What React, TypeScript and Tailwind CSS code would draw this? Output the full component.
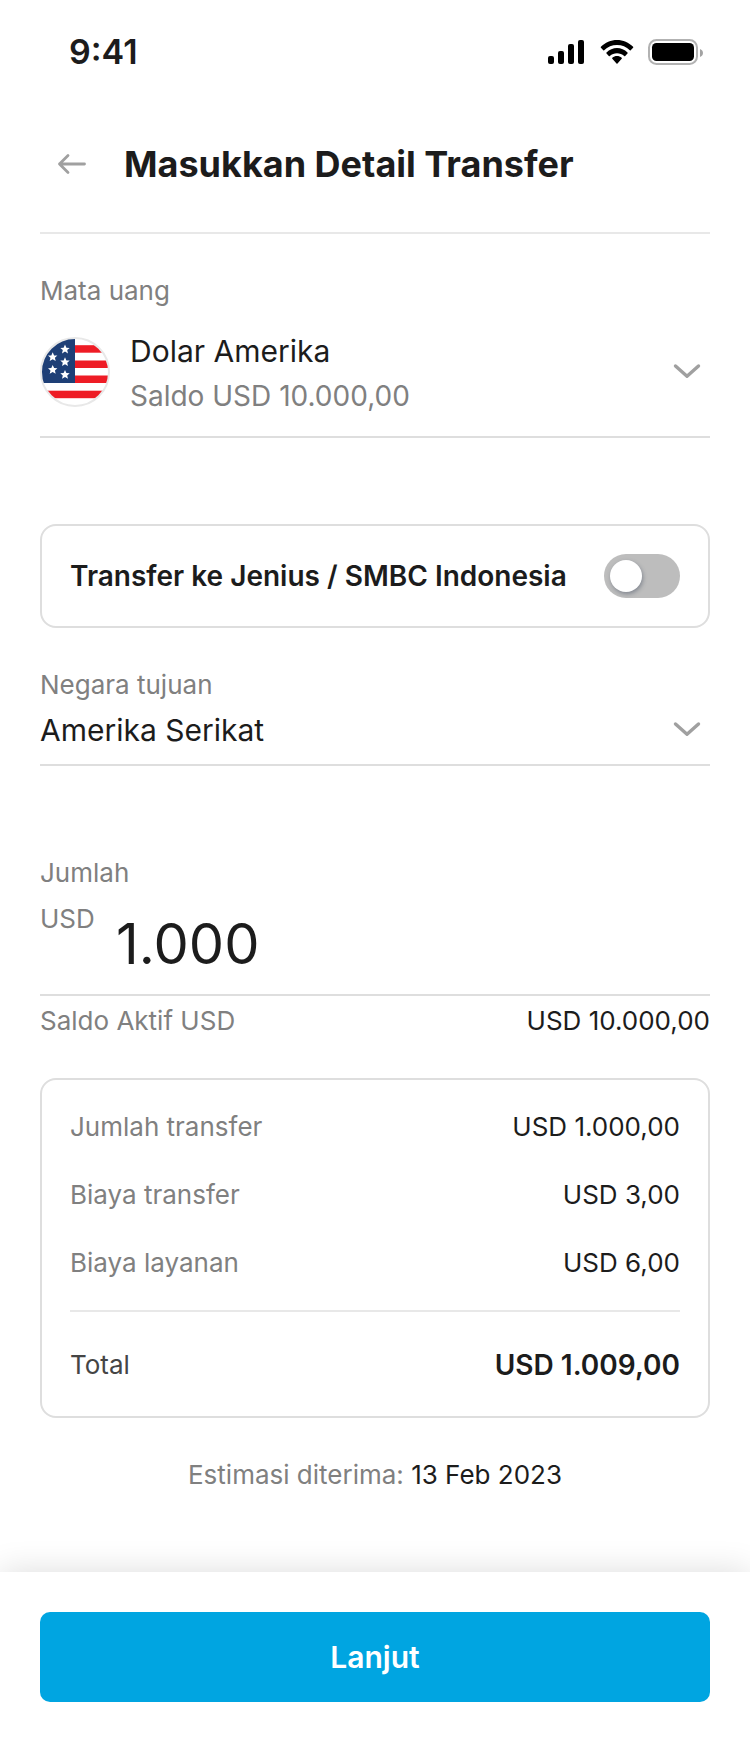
import { useState } from "react";

const STAR_POINTS = "0,-4.8 1.4,-1.6 4.7,-1.4 2.2,0.8 3,4.1 0,2.3 -3,4.1 -2.2,0.8 -4.7,-1.4 -1.4,-1.6";
const STARS = [
  [25, 12.3],
  [12.7, 20],
  [25, 25],
  [12.7, 32.7],
  [25, 37.7],
];

const FEES = [
  { label: "Jumlah transfer", value: "USD 1.000,00" },
  { label: "Biaya transfer", value: "USD 3,00" },
  { label: "Biaya layanan", value: "USD 6,00" },
];

function SignalIcon() {
  return (
    <svg width="36" height="24" viewBox="0 0 36 24" aria-hidden="true">
      <rect x="0" y="16" width="6" height="8" rx="2" />
      <rect x="10" y="11" width="6" height="13" rx="2" />
      <rect x="20" y="4" width="6" height="20" rx="2" />
      <rect x="30" y="0" width="6" height="24" rx="2" />
    </svg>
  );
}

function WifiIcon() {
  return (
    <svg width="34" height="24" viewBox="0 0 34 24" aria-hidden="true">
      <path d="M17 5.1c4.9 0 9.4 1.9 12.8 5.1.3.3.7.3.9 0l2.4-2.5c.3-.3.3-.7 0-1C28.8 2.500 23.1 0 17 0S5.200 2.500.9 6.700c-.3.3-.3.7 0 1l2.400 2.500c.3.3.7.3.9 0C7.600 7 12.100 5.100 17 5.100z" />
      <path d="M17 13.200c2.700 0 5.200 1 7.200 2.700.3.3.7.3 1 0l2.300-2.500c.3-.3.3-.8 0-1-2.900-2.700-6.600-4.300-10.500-4.300S9.400 9.700 6.500 12.400c-.3.2-.3.7 0 1l2.300 2.500c.3.3.7.3 1 0 2-1.700 4.500-2.700 7.200-2.700z" />
      <path d="M21.700 18.700c.3-.3.3-.8 0-1-1.300-1.100-3-1.700-4.700-1.700s-3.400.6-4.700 1.700c-.3.2-.3.7 0 1l4.200 4.700c.3.3.7.3 1 0z" />
    </svg>
  );
}

function BatteryIcon() {
  return (
    <svg width="55" height="26" viewBox="0 0 55 26" aria-hidden="true">
      <rect x="1" y="1" width="48" height="24" rx="7.500" fill="none" stroke="#b2b2b2" strokeWidth="2" />
      <rect x="4" y="4" width="42" height="18" rx="4.500" />
      <path d="M52 10v8c1.800-.7 3-2.200 3-4s-1.200-3.300-3-4z" fill="#a3a3a3" />
    </svg>
  );
}

function Flag() {
  return (
    <svg className="shrink-0" width="70" height="70" viewBox="0 0 70 70" aria-hidden="true">
      <defs>
        <clipPath id="flag-clip">
          <circle cx="35" cy="35" r="34" />
        </clipPath>
      </defs>
      <g clipPath="url(#flag-clip)">
        <rect width="70" height="70" fill="#fff" />
        <rect x="35" y="8.200" width="35" height="7.500" fill="#ee1c25" />
        <rect x="35" y="23.500" width="35" height="7.500" fill="#ee1c25" />
        <rect x="35" y="38.500" width="35" height="7.500" fill="#ee1c25" />
        <rect y="53.700" width="70" height="7.500" fill="#ee1c25" />
        <rect width="35" height="46" fill="#1e3f76" />
        {STARS.map(([x, y]) => (
          <polygon key={`${x}-${y}`} points={STAR_POINTS} transform={`translate(${x} ${y})`} fill="#fff" />
        ))}
      </g>
      <circle cx="35" cy="35" r="34" fill="none" stroke="#e8e8e8" strokeWidth="2" />
    </svg>
  );
}

function Chevron() {
  return (
    <svg
      className="pointer-events-none col-start-1 row-start-1 mr-2 self-center justify-self-end"
      width="30"
      height="18"
      viewBox="0 0 30 18"
      fill="none"
      stroke="#a0a0a0"
      strokeWidth="3.400"
      strokeLinecap="round"
      strokeLinejoin="round"
      aria-hidden="true"
    >
      <path d="M3.500 3 15 13.300 26.500 3" />
    </svg>
  );
}

export default function App() {
  const [amount, setAmount] = useState("1.000");
  const [internal, setInternal] = useState(false);

  return (
    <div className="flex min-h-screen flex-col bg-white font-['Inter',sans-serif] text-[26px] leading-10 text-[#1c1c1c]">
      <div className="flex h-24 items-center justify-between pt-2 pr-[47px] pl-[69px]">
        <span className="text-[34px] font-semibold">9:41</span>
        <div className="flex items-center text-black">
          <SignalIcon />
          <div className="ml-4">
            <WifiIcon />
          </div>
          <div className="ml-[14px]">
            <BatteryIcon />
          </div>
        </div>
      </div>

      <header className="mx-10 flex h-[138px] items-center border-b-2 border-[#e8e8e8]">
        <button type="button" aria-label="Kembali" className="flex w-[84px] cursor-pointer pl-4">
          <svg
            width="32"
            height="24"
            viewBox="0 0 32 24"
            fill="none"
            stroke="#a0a0a0"
            strokeWidth="2.800"
            strokeLinecap="round"
            strokeLinejoin="round"
            aria-hidden="true"
          >
            <path d="M28.500 12H3.500M12 3.500 3.500 12l8.500 8.500" />
          </svg>
        </button>
        <h1 className="text-4xl font-bold">Masukkan Detail Transfer</h1>
      </header>

      <main className="flex flex-1 flex-col px-10 pb-[77px]">
        <section className="border-b-2 border-[#dedede] pt-[37px] pb-[17px]">
          <label htmlFor="currency" className="block text-[#808080]">
            Mata uang
          </label>
          <div className="mt-[14px] grid">
            <div className="col-start-1 row-start-1 flex items-center gap-5">
              <Flag />
              <div className="min-w-0 flex-1 pt-1">
                <select id="currency" className="block h-11 w-full cursor-pointer appearance-none bg-transparent text-3xl leading-[44px]">
                  <option>Dolar Amerika</option>
                </select>
                <p className="text-[28px] leading-[46px] text-[#808080]">Saldo USD 10.000,00</p>
              </div>
            </div>
            <Chevron />
          </div>
        </section>

        <label className="mt-[86px] flex h-[104px] items-center justify-between gap-4 rounded-2xl border-2 border-[#dedede] px-7">
          <span className="text-[28px] font-semibold">Transfer ke Jenius / SMBC Indonesia</span>
          <input
            type="checkbox"
            role="switch"
            checked={internal}
            onChange={(e) => setInternal(e.target.checked)}
            className="flex h-11 w-[76px] shrink-0 cursor-pointer appearance-none items-center rounded-full bg-[#bdbdbd] px-[6px] before:size-8 before:rounded-full before:bg-white before:shadow-[1px_2px_4px_rgba(60,70,90,0.45)] before:content-[''] checked:justify-end checked:bg-[#00a5e1]"
          />
        </label>

        <section className="mt-[37px] border-b-2 border-[#dedede] pb-3">
          <label htmlFor="country" className="block text-[#808080]">
            Negara tujuan
          </label>
          <div className="mt-[3px] grid">
            <select
              id="country"
              className="col-start-1 row-start-1 h-11 w-full cursor-pointer appearance-none bg-transparent text-3xl leading-[44px]"
            >
              <option>Amerika Serikat</option>
            </select>
            <Chevron />
          </div>
        </section>

        <section className="mt-[87px]">
          <label htmlFor="amount" className="block text-[#808080]">
            Jumlah
          </label>
          <div className="mt-[6px] flex border-b-2 border-[#dedede] pb-4">
            <span className="w-[76px] shrink-0 text-[#808080]">USD</span>
            <input
              id="amount"
              type="text"
              inputMode="decimal"
              value={amount}
              onChange={(e) => setAmount(e.target.value)}
              className="mt-[11px] h-[68px] min-w-0 flex-1 bg-transparent text-[56px] leading-[68px] outline-none"
            />
          </div>
          <div className="mt-[5px] flex justify-between">
            <span className="text-[#808080]">Saldo Aktif USD</span>
            <span>USD 10.000,00</span>
          </div>
        </section>

        <dl className="mt-[37px] rounded-2xl border-2 border-[#dedede] px-7 pt-[27px] pb-[31px]">
          <div className="flex flex-col gap-7 border-b-2 border-[#e8e8e8] pb-[27px]">
            {FEES.map((fee) => (
              <div key={fee.label} className="flex justify-between">
                <dt className="text-[#808080]">{fee.label}</dt>
                <dd>{fee.value}</dd>
              </div>
            ))}
          </div>
          <div className="mt-[33px] flex justify-between">
            <dt className="text-[#454545]">Total</dt>
            <dd className="text-[28px] font-semibold">USD 1.009,00</dd>
          </div>
        </dl>

        <p className="mt-[37px] text-center">
          <span className="text-[#808080]">Estimasi diterima:</span> 13 Feb 2023
        </p>
      </main>

      <footer className="bg-white px-10 pt-10 pb-[60px] shadow-[0_0_32px_rgba(0,0,0,0.14)]">
        <button
          type="button"
          className="h-[90px] w-full cursor-pointer rounded-[10px] bg-[#00a5e1] text-3xl font-semibold text-white"
        >
          Lanjut
        </button>
      </footer>
    </div>
  );
}
